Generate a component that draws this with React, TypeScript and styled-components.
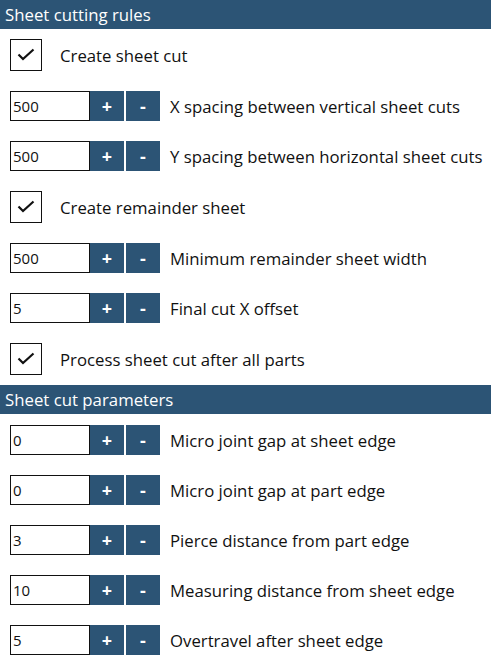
import styled, { createGlobalStyle } from 'styled-components'

const GlobalStyle = createGlobalStyle`
  html, body {
    margin: 0;
    padding: 0;
    background: #fff;
  }
  body {
    font-family: 'Open Sans', 'Noto Sans', sans-serif;
    color: #111;
  }
`

const Panel = styled.div`
  width: 491px;
  display: flex;
  flex-direction: column;
`

const SectionHeader = styled.div`
  height: 29px;
  background: #2c5475;
  color: #fff;
  font-size: 16.8px;
  line-height: 29px;
  padding-left: 5px;
`

const SectionBody = styled.div<{ $top: number }>`
  display: flex;
  flex-direction: column;
  gap: 20px;
  padding: ${(p) => p.$top}px 10px 10px 10px;
`

const Row = styled.div`
  display: flex;
  align-items: center;
`

const CheckBox = styled.div`
  width: 30px;
  height: 30px;
  border: 1px solid #111;
  display: flex;
  align-items: center;
  justify-content: center;
  flex-shrink: 0;
`

const NumberBox = styled.div`
  width: 76px;
  height: 28px;
  border: 1px solid #111;
  font-size: 15px;
  line-height: 28px;
  padding-left: 2px;
  box-sizing: content-box;
  flex-shrink: 0;
`

const StepButton = styled.div<{ $gap?: boolean }>`
  width: 34px;
  height: 30px;
  background: #2c5475;
  color: #fff;
  font-size: 18px;
  font-weight: 700;
  display: flex;
  align-items: center;
  justify-content: center;
  margin-left: ${(p) => (p.$gap ? '2px' : '0')};
  flex-shrink: 0;
`

const Label = styled.span<{ $indent: number }>`
  font-size: 16.75px;
  margin-left: ${(p) => p.$indent}px;
  white-space: nowrap;
`

type Item =
  | { kind: 'check'; label: string }
  | { kind: 'num'; value: string; label: string }

const rules: Item[] = [
  { kind: 'check', label: 'Create sheet cut' },
  { kind: 'num', value: '500', label: 'X spacing between vertical sheet cuts' },
  { kind: 'num', value: '500', label: 'Y spacing between horizontal sheet cuts' },
  { kind: 'check', label: 'Create remainder sheet' },
  { kind: 'num', value: '500', label: 'Minimum remainder sheet width' },
  { kind: 'num', value: '5', label: 'Final cut X offset' },
  { kind: 'check', label: 'Process sheet cut after all parts' },
]

const params: Item[] = [
  { kind: 'num', value: '0', label: 'Micro joint gap at sheet edge' },
  { kind: 'num', value: '0', label: 'Micro joint gap at part edge' },
  { kind: 'num', value: '3', label: 'Pierce distance from part edge' },
  { kind: 'num', value: '10', label: 'Measuring distance from sheet edge' },
  { kind: 'num', value: '5', label: 'Overtravel after sheet edge' },
]

function Check() {
  return (
    <svg width="18" height="14" viewBox="0 0 18 14">
      <polyline points="1.5,6.5 6,11 16.5,1.5" fill="none" stroke="#111" strokeWidth="2.2" />
    </svg>
  )
}

function Field({ item }: { item: Item }) {
  if (item.kind === 'check') {
    return (
      <Row>
        <CheckBox>
          <Check />
        </CheckBox>
        <Label $indent={18}>{item.label}</Label>
      </Row>
    )
  }
  return (
    <Row>
      <NumberBox>{item.value}</NumberBox>
      <StepButton>+</StepButton>
      <StepButton $gap>-</StepButton>
      <Label $indent={10}>{item.label}</Label>
    </Row>
  )
}

export default function App() {
  return (
    <>
      <GlobalStyle />
      <Panel>
        <SectionHeader>Sheet cutting rules</SectionHeader>
        <SectionBody $top={10}>
          {rules.map((it, i) => (
            <Field key={i} item={it} />
          ))}
        </SectionBody>
        <SectionHeader>Sheet cut parameters</SectionHeader>
        <SectionBody $top={11}>
          {params.map((it, i) => (
            <Field key={i} item={it} />
          ))}
        </SectionBody>
      </Panel>
    </>
  )
}
